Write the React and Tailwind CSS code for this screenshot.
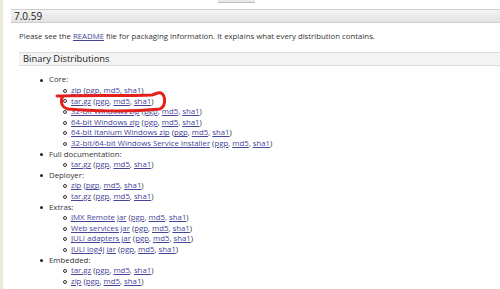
import React from "react";

const link = "text-[#45459a] underline underline-offset-[1px] decoration-[0.5px]";

const sections = [
  {
    title: "Core:",
    items: [
      "zip",
      "tar.gz",
      "32-bit Windows zip",
      "64-bit Windows zip",
      "64-bit Itanium Windows zip",
      "32-bit/64-bit Windows Service Installer",
    ],
  },
  { title: "Full documentation:", items: ["tar.gz"] },
  { title: "Deployer:", items: ["zip", "tar.gz"] },
  {
    title: "Extras:",
    items: ["JMX Remote jar", "Web services jar", "JULI adapters jar", "JULI log4j jar"],
  },
  { title: "Embedded:", items: ["tar.gz", "zip"] },
];

function Download({ name }) {
  return (
    <li className="flex items-center h-[10.6px]">
      <span className="w-[4px] h-[4px] rounded-full border border-[#333] mr-[4px] ml-[-8px] shrink-0" />
      <a className={link}>{name}</a>
      <span>&nbsp;(</span>
      <a className={link}>pgp</a>
      <span>,&nbsp;</span>
      <a className={link}>md5</a>
      <span>,&nbsp;</span>
      <a className={link}>sha1</a>
      <span>)</span>
    </li>
  );
}

export default function App() {
  return (
    <div
      className="relative flex w-[500px] h-[289px] overflow-hidden bg-white text-[#333] text-[7.8px]"
      style={{ fontFamily: '"Open Sans", "DejaVu Sans", sans-serif' }}
    >
      {/* sidebar edge */}
      <div className="w-[3px] shrink-0 bg-[#ebe9d6]" />

      <div className="flex-1 flex flex-col">
        {/* bottom of the search box above */}
        <div className="h-[9px] pl-[215px]">
          <div className="w-[37px] h-[3px] bg-[#e8e8e8] border-b border-[#bdbdbd]" />
        </div>

        {/* version header */}
        <div className="ml-[8px] h-[14px] flex items-center pl-[3px] border-y border-[#cfcfcf] bg-gradient-to-b from-[#f5f5f5] to-[#e2e2e2] text-[10px] text-[#222]">
          7.0.59
        </div>

        <div className="ml-[16px] mt-[8px] leading-[10px]">
          Please see the <a className={link}>README</a> file for packaging information. It explains what every distribution contains.
        </div>

        <div className="ml-[16px] mt-[11px] h-[14px] flex items-center pl-[4px] border-y border-[#dcdcdc] bg-[#f3f3f3] text-[9.4px] text-[#222]">
          Binary Distributions
        </div>

        <ul className="ml-[46px] mt-[9px]">
          {sections.map((s) => (
            <li key={s.title}>
              <div className="flex items-center h-[10.6px]">
                <span className="w-[3px] h-[3px] bg-[#222] rounded-full ml-[-9px] mr-[6px]" />
                {s.title}
              </div>
              <ul className="ml-[22px]">
                {s.items.map((it, i) => (
                  <Download key={i} name={it} />
                ))}
              </ul>
            </li>
          ))}
        </ul>
      </div>

      {/* hand-drawn red marker */}
      <svg className="absolute left-0 top-0 pointer-events-none" width="500" height="289">
        <path
          d="M57 96 C 80 95, 130 96, 152 95 C 156 94, 158 92, 161 93 C 166 96, 166 106, 160 109 C 130 112, 90 111, 68 109 C 61 107, 60 101, 63 96"
          fill="none"
          stroke="#e3201c"
          strokeWidth="3"
          strokeLinecap="round"
          strokeLinejoin="round"
        />
      </svg>
    </div>
  );
}
